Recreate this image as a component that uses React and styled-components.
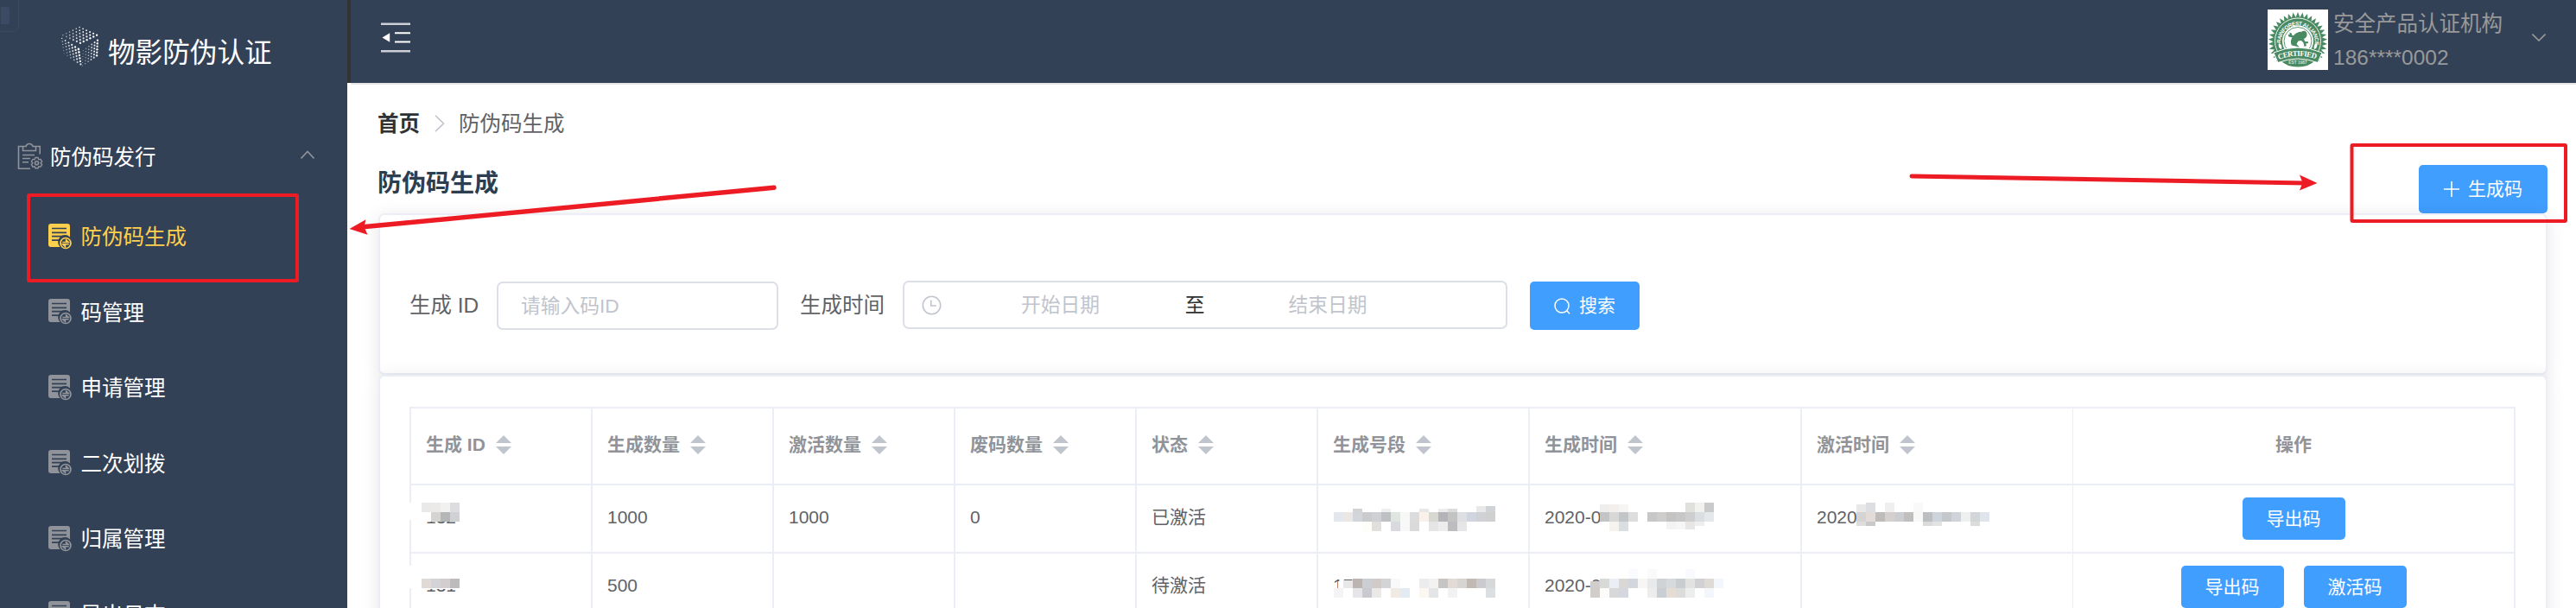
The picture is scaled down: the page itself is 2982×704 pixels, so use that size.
import React from "react";
import styled, { createGlobalStyle } from "styled-components";

const Global = createGlobalStyle`
  * { box-sizing: border-box; }
  body { margin: 0; background: #fff; }
  svg { display: block; flex: none; }
`;

const Shell = styled.div`
  position: relative;
  display: flex;
  width: 2982px;
  height: 704px;
  overflow: hidden;
  background: #fff;
  color: #606266;
  font-family: "Liberation Sans", "Noto Sans CJK SC", sans-serif;
  font-size: 24.5px;
  white-space: nowrap;
`;

/* ---------- sidebar ---------- */
const Sidebar = styled.aside`
  position: relative;
  flex: 0 0 402px;
  height: 704px;
  overflow: hidden;
  background: #334157;
`;
const CornerTab = styled.div`
  position: absolute;
  left: -4px;
  top: -4px;
  width: 26px;
  height: 41px;
  padding: 11px 0 0 4px;
  border: 1px solid #3b495f;
  border-radius: 0 0 6px 0;
`;
const CornerChip = styled.div`
  width: 10px;
  height: 20px;
  border-radius: 0 3px 3px 0;
  background: #3e4a63;
`;
const Brand = styled.div`
  display: flex;
  align-items: flex-start;
  height: 132px;
  padding: 28px 0 0 68px;
`;
const BrandName = styled.div`
  margin: 9px 0 0 9px;
  font-size: 31.6px;
  line-height: 48px;
  color: #fff;
`;
const Group = styled.div`
  display: flex;
  align-items: center;
  height: 98px;
  padding: 0 38px 0 19px;
  color: #fff;
  span { flex: 1; margin-left: 7px; padding-top: 3px; line-height: 40px; }
`;
const SubItem = styled.div`
  display: flex;
  align-items: center;
  height: 87.5px;
  padding-left: 56px;
  color: ${(p) => (p.$active ? "#ffd04b" : "#fff")};
  svg { color: ${(p) => (p.$active ? "#ffd04b" : "#909399")}; }
  span { margin-left: 10.5px; padding-top: 3px; line-height: 40px; }
`;

/* ---------- header ---------- */
const Main = styled.main`
  flex: 1;
  display: flex;
  flex-direction: column;
  min-width: 0;
`;
const Header = styled.header`
  display: flex;
  align-items: flex-start;
  justify-content: space-between;
  height: 96px;
  flex: none;
  padding: 11px 35px 0 34px;
  border-left: 4px solid #333;
  background: #334157;
`;
const HeaderRule = styled.div`
  height: 2px;
  flex: none;
  margin-left: 4px;
  background: #e6e6e6;
`;
const FoldButton = styled.div`
  padding-top: 15px;
`;
const Account = styled.div`
  display: flex;
  color: #999;
`;
const AccountText = styled.div`
  width: 230px;
  margin: -3px 0 0 6.5px;
  div { height: 39px; line-height: 40px; }
`;
const ChevronSlot = styled.div`
  padding-top: 27px;
`;

/* ---------- page ---------- */
const Page = styled.section`
  flex: 1;
  min-height: 0;
  display: flex;
  flex-direction: column;
  padding: 0 33px 0 36px;
`;
const Crumbs = styled.nav`
  display: flex;
  align-items: center;
  height: 90px;
  flex: none;
  line-height: 40px;
  b { margin: 1px 0 0 -1px; color: #303133; }
  svg { margin: 0 16px 0 17px; }
  span { margin-top: 1px; }
`;
const TitleRow = styled.div`
  display: flex;
  justify-content: space-between;
  align-items: flex-end;
  height: 59px;
  flex: none;
`;
const Title = styled.h1`
  align-self: flex-start;
  margin: 2px 0 0 -1px;
  font-size: 28px;
  line-height: 46px;
  color: #2c3e50;
`;
const Button = styled.button`
  display: flex;
  align-items: center;
  justify-content: center;
  gap: 10px;
  width: ${(p) => p.$w}px;
  height: ${(p) => p.$h || 56}px;
  padding: 0;
  border: 0;
  border-radius: 5px;
  background: #409eff;
  color: #fff;
  font: 21px/30px "Liberation Sans", "Noto Sans CJK SC", sans-serif;
`;
const Card = styled.div`
  height: ${(p) => p.$h}px;
  flex: none;
  padding: ${(p) => p.$pad};
  border: 2px solid #ebeef5;
  border-radius: 7px;
  background: #fff;
  box-shadow: 0 3.5px 21px rgba(0, 0, 0, 0.1);
`;
const Form = styled.form`
  display: flex;
  align-items: center;
  height: 56px;
`;
const Label = styled.label`
  width: ${(p) => p.$w}px;
  line-height: 40px;
`;
const Field = styled.div`
  display: flex;
  align-items: center;
  width: ${(p) => p.$w}px;
  height: 56px;
  margin-right: ${(p) => p.$gap}px;
  padding-left: ${(p) => p.$pl}px;
  border: 2px solid #dcdfe6;
  border-radius: 7px;
  font-size: 22.75px;
  line-height: 36px;
  color: #c0c4cc;
`;
const DateField = styled(Field)`
  margin-top: -2px;
`;
const DatePart = styled.span`
  width: ${(p) => p.$w}px;
  text-align: center;
`;
const Separator = styled(DatePart)`
  color: #303133;
`;

/* ---------- table ---------- */
const Table = styled.div`
  width: 2438px;
  border-left: 2px solid #ebeef5;
  border-top: 2px solid #ebeef5;
`;
const Row = styled.div`
  display: grid;
  grid-template-columns: repeat(5, 210px) 245px 315px 314px 512px;
  height: ${(p) => (p.$head ? 89 : 79)}px;
  font-size: 21px;
  line-height: 36px;
  color: ${(p) => (p.$head ? "#909399" : "#606266")};
  font-weight: ${(p) => (p.$head ? 700 : 400)};
`;
const Cell = styled.div`
  position: relative;
  display: flex;
  align-items: center;
  padding: 0 0 3px 17px;
  border-right: ${(p) => (p.$thin ? 1 : 2)}px solid #ebeef5;
  border-bottom: 2px solid #ebeef5;
`;
const ActionCell = styled(Cell)`
  justify-content: center;
  gap: 23px;
  padding: ${(p) => (p.$head ? "0 0 3px" : "0")};
`;
const Mosaic = styled.svg`
  position: absolute;
  left: ${(p) => p.$x}px;
  top: ${(p) => p.$y}px;
  overflow: visible;
`;
const SortGlyph = styled.svg`
  margin-left: 12px;
`;
const Overlay = styled.svg`
  position: absolute;
  left: 0;
  top: 0;
  pointer-events: none;
`;

/* ---------- drawings ---------- */
const lerp = (a, b, t) => a + (b - a) * t;
const face = (o, u, v, n, size, alpha) => {
  const out = [];
  for (let i = 0; i < n; i++)
    for (let j = 0; j < n; j++) {
      const s = (i + 0.4) / n;
      const t = (j + 0.4) / n;
      out.push({
        x: o[0] + u[0] * s + v[0] * t,
        y: o[1] + u[1] * s + v[1] * t,
        r: size(s, t),
        o: alpha(s, t),
      });
    }
  return out;
};
const DOTS = [
  ...face([24, 2], [24, 11], [-23, 11], 6, (s, t) => lerp(0.9, 1.5, s), (s, t) => lerp(1, 0.35, t * (1 - s))),
  ...face([2, 14], [23, 15], [3, 21], 6, (s, t) => lerp(0.8, 1.7, s) * lerp(1, 0.8, t), (s, t) => lerp(1, 0.15, t * (1 - s))),
  ...face([27, 30], [20, -14], [-1, 21], 6, (s, t) => lerp(0.6, 1.5, s), (s, t) => lerp(0.5, 1, s)),
];
const CubeLogo = () => (
  <svg width="48" height="50" viewBox="0 0 48 50" fill="#fff">
    {DOTS.map((d, i) => (
      <ellipse key={i} cx={d.x} cy={d.y} rx={d.r * 0.8} ry={d.r * 0.85} opacity={d.o} />
    ))}
  </svg>
);
const ClipboardIcon = () => (
  <svg width="32" height="32" viewBox="0 0 32 32" fill="none" stroke="#909399" strokeWidth="1.6">
    <path d="M16 30.3H2.500V4.500h5M22 4.500h5.200v9M7.500 9.500V4.500h3.500c1-4 7-4 8 0h3.500v5z" />
    <path d="M7 14.500h14M7 18.500h9M7 22.800h7" />
    <path d="M22 17.500h3l.8 2.200 2.300-.3 1.500 2.600-1.500 1.700 1.500 1.800-1.500 2.600-2.300-.4-.8 2.100h-3l-.9-2.100-2.200.4-1.500-2.600 1.400-1.800-1.400-1.700 1.500-2.600 2.200.3z" strokeWidth="1.400" />
    <circle cx="23.500" cy="23.700" r="2" />
  </svg>
);
const DocIcon = () => (
  <svg width="27" height="30" viewBox="0 0 27 30">
    <path d="M3 0h19a3 3 0 0 1 3 3v12.500a7.600 7.600 0 0 0-11.500 11.500H3a3 3 0 0 1-3-3V3a3 3 0 0 1 3-3z" fill="currentColor" />
    <path d="M4 5.500h17M4 10.300h17M4 14.700h17M4 19.200h8" stroke="#334157" strokeWidth="1.700" />
    <circle cx="20" cy="22.500" r="6" fill="none" stroke="currentColor" strokeWidth="1.700" />
    <path d="M16.300 21.500h7.200l-3-2.800v2.800M23.700 23.800h-7.200l3 2.800v-2.800" fill="none" stroke="currentColor" strokeWidth="1.400" />
  </svg>
);
const FoldIcon = () => (
  <svg width="36" height="36" viewBox="0 0 36 36" stroke="#fff" strokeWidth="2" fill="#fff">
    <path d="M1 1.800h34M1 33.200h34" opacity=".75" strokeWidth="2.600" />
    <path d="M17 12.300h18M17 22.600h18" />
    <path d="M2.500 17.500l8.700-5.200v10.400z" stroke="none" />
  </svg>
);
const teeth = (() => {
  const pts = [];
  const n = 38;
  for (let i = 0; i < n * 2; i++) {
    const a = (i * Math.PI) / n;
    const r = i % 2 ? 28.5 : 34.2;
    pts.push(`${(35 + r * Math.sin(a)).toFixed(2)},${(37.3 - r * Math.cos(a)).toFixed(2)}`);
  }
  return pts.join(" ");
})();
const Emblem = () => (
  <svg width="70" height="70" viewBox="0 0 70 70">
    <rect width="70" height="70" fill="#fff" />
    <polygon points={teeth} fill="#4a8a63" />
    <circle cx="35" cy="36.500" r="26.500" fill="none" stroke="#fff" strokeWidth=".9" />
    <circle cx="35" cy="36.500" r="18" fill="#fff" />
    <circle cx="35" cy="36.500" r="16" fill="none" stroke="#4a8a63" strokeWidth=".9" />
    <path id="ring" d="M16.500 46A20 20 0 1 1 53.500 46" fill="none" />
    <text fill="#fff" fontSize="6.200" fontWeight="700" fontFamily="Liberation Sans">
      <textPath href="#ring" startOffset="7" textLength="66">RAINFOREST ALLIANCE</textPath>
    </text>
    <path d="M45 26.500c-1-2-4-2.500-5.500-.8-4.500 0-8 2-10 5.300-2.500 3-3.500 7-1.500 10.500l9 2-3.500-3.500 2-3.500 3.500-.5 2.500 2.500 1 4.500 2.500-1-.8-2.500 3-.5-.3-1.800-3.700-.2-1.200-3c3-1.200 4.500-4.500 3-7.500z" fill="#4a8a63" />
    <path d="M30.500 33l-6-1.500-.8-2.200 2-.5-.3-2.300 2.300 1 .8 2.500 3 .5z" fill="#4a8a63" />
    <path d="M13 39c3 1 4 4 3 7-3-1-4-4-3-7zM57 39c-3 1-4 4-3 7 3-1 4-4 3-7z" fill="#fff" />
    <path d="M0 70V62l10-2h50l10 2v8z" fill="#fff" />
    <path d="M15 59q20-7 40 0-7 7.500-20 7.500T15 59z" fill="#4a8a63" />
    <path d="M7 50q28-12 56 0l-5 11.500q-23-9-46 0z" fill="#4a8a63" stroke="#fff" strokeWidth="1" />
    <path id="band" d="M13 58q22-8.500 45 0" fill="none" />
    <text fill="#fff" fontSize="8.800" fontWeight="700" fontFamily="Liberation Serif">
      <textPath href="#band" textLength="44">CERTIFIED</textPath>
    </text>
    <text x="35" y="62.500" textAnchor="middle" fill="#cfe0d5" fontSize="4.800" fontWeight="700" fontFamily="Liberation Sans">EST 1987</text>
  </svg>
);
const Chevron = ({ d, w, h, c }) => (
  <svg width={w} height={h} viewBox={`0 0 ${w} ${h}`} fill="none" stroke={c} strokeWidth="1.600">
    <path d={d} />
  </svg>
);
const Clock = () => (
  <svg width="23" height="23" viewBox="0 0 23 23" fill="none" stroke="#c0c4cc" strokeWidth="1.600">
    <circle cx="11.500" cy="11.500" r="10.200" />
    <path d="M10.800 5.500v6.500h6" />
  </svg>
);
const SearchIcon = () => (
  <svg width="19" height="19" viewBox="0 0 19 19" fill="none" stroke="#fff" strokeWidth="1.500">
    <circle cx="9" cy="9" r="8" />
    <path d="M14.500 14.500l3.500 3.700" />
  </svg>
);
const PlusIcon = () => (
  <svg width="18" height="18" viewBox="0 0 18 18" stroke="#fff" strokeWidth="1.600">
    <path d="M9 0v18M0 9h18" />
  </svg>
);
const SortIcon = () => (
  <SortGlyph width="18" height="22" viewBox="0 0 18 22" fill="#c0c4cc">
    <path d="M0 9L9 0l9 9zM0 13h18l-9 9z" />
  </SortGlyph>
);

/* Each mosaic is rows of 11px tiles: [y, height, firstColumn, "colour colour ..."]; "-" leaves a gap. */
const Tiles = ({ x, y, rows, covers = [] }) => (
  <Mosaic $x={x} $y={y} width="10" height="10" shapeRendering="crispEdges">
    {covers.map((c, i) => (
      <rect key={"c" + i} x={c[0]} y={c[1]} width={c[2]} height={c[3]} fill="#fff" />
    ))}
    {rows.map(([ry, h, k, cols], r) =>
      cols.split(" ").map((c, i) =>
        c === "-" ? null : (
          <rect key={r + "-" + i} x={(k + i) * 11} y={ry} width="11" height={h} fill={"#" + c} />
        )
      )
    )}
  </Mosaic>
);

const COLUMNS = ["生成 ID", "生成数量", "激活数量", "废码数量", "状态", "生成号段", "生成时间", "激活时间"];
const ROWS = [
  {
    id: "132", total: "1000", active: "1000", waste: "0", status: "已激活", range: "", created: "2020-0", activated: "2020-",
    actions: ["导出码"],
    idTiles: { x: 12, y: 20, covers: [[-14, 0, 14, 20], [0, 0, 44, 22]], rows: [[0, 11, 0, "e9e9e9 ebeae9 f1f1ef dcdde0"], [11, 11, 1, "d6d3d3 b5b6b8 d0d1d5"]] },
    rangeTiles: { x: 18, y: 20, rows: [
      [7, 4, 2, "d3d3d3 - - eeeff0 - - - e6e9eb - ececec dcdcde"],
      [4, 7, 15, "e9e9e9 d0d4d8"],
      [11, 11, 0, "e4e8ee eae7e4 d2d6da cbcacc cfd0d3 bfc0c3 dfe5df f8f8f6 dddcdd fbf1eb d8d8d3 b3b3b8 c3c3c4 dedfe2 d0d5e0 d0d1d5 d0d0d0"],
      [22, 11, 3, "fdfef8 e0dfdd - d9dadd f8f8f8 dadada - e5e5e5 ededed bdbdbf e6e6e7"],
    ] },
    createdTiles: { x: 81, y: 20, rows: [
      [2, 9, 0, "efeeec f2efed f7f5f3"], [0, 11, 9, "e0e0df f2f1ee c9cacc"],
      [11, 11, 0, "c3c4c6 d8d8d8 c3c6c6 dddddd - c7c7c7 cfcdcb c3c3c3 c7c7c7 cecece dadee3 e4e8ea"],
      [22, 11, 1, "f6f2ee d9dee0"], [22, 9, 7, "f3f3f3 f6f6f6 e8e6e5"], [22, 5, 10, "eeeeee"],
    ] },
    activatedTiles: { x: 63, y: 20, rows: [
      [2, 9, 0, "e8e8e8"], [0, 11, 1, "dcdee1 - efefef - - f9f9f9"],
      [11, 11, 0, "d6d4d3 e3dbd7 bdbcbb d5d0cf cccdd1 bfbfbe f8f8f8 bcbec2 cdd4dc c4c8cb d0d4da eef0f0 d3d6d9 dfe4ed"],
      [22, 5, 0, "dddddd c9c9c9 - - - - - dadada e2e2e2 - - - dcdcdc"],
    ] },
  },
  {
    id: "131", total: "500", active: "", waste: "", status: "待激活", range: "17", created: "2020-0", activated: "",
    actions: ["导出码", "激活码"],
    idTiles: { x: 12, y: 29, covers: [[-14, -15, 14, 26], [0, -6, 44, 18]], rows: [[0, 11, 0, "dfdad6 d2d4d8 d3cdd0 bcbcbf"]] },
    rangeTiles: { x: 18, y: 29, covers: [[5, 3, 22, 14]], rows: [
      [2, 9, 1, "e8e8e8"],
      [0, 11, 2, "bbb4b0 cacfd4 d0cac8 d2d4d6 f7f9fb - - ebecee f3f2f1 c7c5c4 e2dad4 d6d5d2 c0bab3 cbcbcf d6d8da"],
      [11, 11, 0, "f4f4f4 - e6e6e8 c9cacf eae9e8 - efeae3 e3ebf2 - fcf7f0 e4e5e7 - f2f2f2 - - - dcdfe2"],
    ] },
    createdTiles: { x: 70, y: 29, rows: [
      [-11, 11, 4, "f9fbfe - fcfaf8 - - - f8fafd"], [3, 8, 0, "d0cdcb"],
      [0, 11, 1, "d8dad7 ebeef4 dad8d4 d2d6df f8f6f5 e8e9eb d0d3d6 d8d9dc c9cdd0 e2e2e0 d1d0d2 dfdad6 f3f7fb"],
      [11, 11, 0, "d0cdcb fcfbf9 d8d8d8 d4d8de - - ededed c9ced2 e5dcd3 dcdcda eceeed - f3f7fc"],
    ] },
  },
];
const MENU = ["防伪码生成", "码管理", "申请管理", "二次划拨", "归属管理", "导出日志"];

export default function App() {
  return (
    <Shell>
      <Global />
      <Sidebar>
        <CornerTab><CornerChip /></CornerTab>
        <Brand>
          <CubeLogo />
          <BrandName>物影防伪认证</BrandName>
        </Brand>
        <Group>
          <ClipboardIcon />
          <span>防伪码发行</span>
          <Chevron w={16} h={14} d="M.5 9.500L8 1.500l7.500 8" c="#909399" />
        </Group>
        {MENU.map((m, i) => (
          <SubItem key={m} $active={i === 0}>
            <DocIcon />
            <span>{m}</span>
          </SubItem>
        ))}
      </Sidebar>
      <Main>
        <Header>
          <FoldButton><FoldIcon /></FoldButton>
          <Account>
            <Emblem />
            <AccountText>
              <div>安全产品认证机构</div>
              <div>186****0002</div>
            </AccountText>
            <ChevronSlot>
              <Chevron w={16} h={10} d="M.5 1.500L8 9l7.500-7.500" c="#999" />
            </ChevronSlot>
          </Account>
        </Header>
        <HeaderRule />
        <Page>
          <Crumbs>
            <b>首页</b>
            <Chevron w={12} h={20} d="M1 .8L10.500 10 1 19.200" c="#c0c4cc" />
            <span>防伪码生成</span>
          </Crumbs>
          <TitleRow>
            <Title>防伪码生成</Title>
            <Button $w={149}><PlusIcon />生成码</Button>
          </TitleRow>
          <Card $h={187} $pad="77px 34px">
            <Form>
              <Label $w={101}>生成 ID</Label>
              <Field $w={326} $gap={25} $pl={26}>请输入码ID</Field>
              <Label $w={119}>生成时间</Label>
              <DateField $w={700} $gap={26} $pl={20}>
                <Clock />
                <DatePart $w={275}>开始日期</DatePart>
                <Separator $w={36}>至</Separator>
                <DatePart $w={272}>结束日期</DatePart>
              </DateField>
              <Button type="button" $w={127}><SearchIcon />搜索</Button>
            </Form>
          </Card>
          <Card $h={400} $pad="35px 34px">
            <Table>
              <Row $head>
                {COLUMNS.map((c, i) => (
                  <Cell key={c} $thin={i === 7}>{c}<SortIcon /></Cell>
                ))}
                <ActionCell $head>操作</ActionCell>
              </Row>
              {ROWS.map((r) => (
                <Row key={r.id}>
                  <Cell>{r.id}<Tiles {...r.idTiles} /></Cell>
                  <Cell>{r.total}</Cell>
                  <Cell>{r.active}</Cell>
                  <Cell>{r.waste}</Cell>
                  <Cell>{r.status}</Cell>
                  <Cell>{r.range}<Tiles {...r.rangeTiles} /></Cell>
                  <Cell>{r.created}<Tiles {...r.createdTiles} /></Cell>
                  <Cell $thin>{r.activated}{r.activatedTiles && <Tiles {...r.activatedTiles} />}</Cell>
                  <ActionCell>
                    {r.actions.map((a) => <Button key={a} $w={119} $h={49}>{a}</Button>)}
                  </ActionCell>
                </Row>
              ))}
            </Table>
          </Card>
        </Page>
      </Main>
      <Overlay width="2982" height="704" viewBox="0 0 2982 704" fill="none" stroke="#ed1c24" strokeWidth="4">
        <rect x="33" y="226" width="311" height="99" rx="1" />
        <rect x="2722.500" y="168" width="247.500" height="88" rx="1" />
        <path d="M896 217.300L420 262.800" strokeWidth="5.500" strokeLinecap="round" />
        <path d="M404.500 265L423.500 254.300 421.500 262.800 425.500 271.800z" fill="#ed1c24" stroke="none" />
        <path d="M2213 204L2668 212" strokeWidth="5" strokeLinecap="round" />
        <path d="M2682.500 212L2662 202.500 2665.500 211.500 2662 220.500z" fill="#ed1c24" stroke="none" />
      </Overlay>
    </Shell>
  );
}
